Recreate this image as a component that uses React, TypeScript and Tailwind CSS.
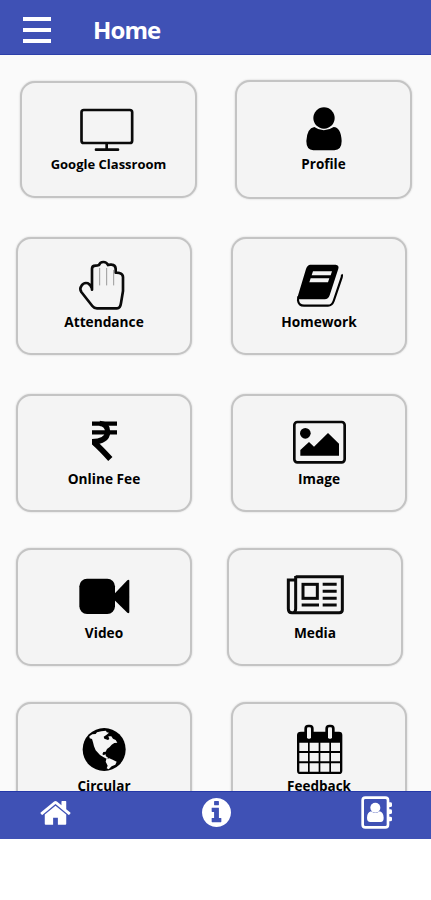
import type { ReactNode } from "react";

interface Tile {
  label: string;
  labelClass?: string;
  viewBox: string;
  icon: ReactNode;
  cardClass?: string;
}

interface TileRow {
  className: string;
  tiles: Tile[];
}

const MonitorIcon = (
  <g fill="none" stroke="#0a0a0a" strokeWidth="8">
    <rect x="244.5" y="330" width="152" height="99" rx="7" />
    <path d="M320 430v18M288 449h66" strokeLinecap="round" />
  </g>
);

const UserIcon = (
  <g>
    <circle cx="327" cy="174" r="32" />
    <path d="M298 201q28 20 58 0q22 2 24 42q0 27-22 28h-63q-21-1-21-28q2-39 24-42z" />
  </g>
);

const HandIcon = (
  <g fill="none" stroke="#0a0a0a" strokeLinejoin="round" strokeLinecap="round">
    <path
      strokeWidth="8"
      d="M276 194V131q0-9 11-9q5 0 10-2q3-9 13-9t14 9q5-2 11-1q11 1 12 12v12q4-1 11 1q11 3 11 12v42l-6 36q-2 16-12 16h-60q-9 0-14-7l-33-42q-6-10 0-18q7-12 20-8q8 4 12 16z"
    />
    <path stroke="#999" strokeWidth="3" d="M299 130v50M320 130v50M341 136v44" />
  </g>
);

const BookIcon = (
  <g>
    <path
      fillRule="evenodd"
      d="M285 119h77q11 1 8 12l-26 80q-4 12-15 12h-73q-6 0-9-5l26-86q3-11 12-13zM294 139l-4 12h57l4-12zM287 160l-4 12h56l4-12z"
    />
    <path
      d="M380 148q2 3 0 9l-24 71q-5 14-17 14h-72q-16 0-18-16q0-6 2-12"
      fill="none"
      stroke="#000"
      strokeWidth="6.5"
    />
  </g>
);

const RupeeIcon = (
  <g fill="none" stroke="#000">
    <path strokeWidth="13" d="M276 117h75M276 143h75" />
    <path strokeWidth="16" d="M299 116q24 2 24 26q-2 29-47 29" />
    <path strokeWidth="17" d="M282 173q22 20 49 50" />
    <path fill="#000" stroke="none" d="M276 165h16v22h-5l-11-9z" />
  </g>
);

const ImageIcon = (
  <g>
    <rect x="238" y="113" width="151" height="121" rx="9" fill="none" stroke="#080808" strokeWidth="8" />
    <circle cx="271" cy="147" r="16" />
    <path d="M256 214v-17l26-24 15 14 42-41 33 32v36z" />
  </g>
);

const VideoIcon = (
  <g>
    <rect x="238" y="116" width="107" height="106" rx="23" />
    <path d="M337 168l45-47q6-5 6 2v92q0 7-6 3l-45-44z" />
  </g>
);

const NewspaperIcon = (
  <g fill="none" stroke="#0a0a0a" strokeWidth="9">
    <path d="M242 110h140v100q0 8-9 8H231q-11 0-11-12v-86h21" />
    <path d="M242 108v98q0 9-6 12" />
    <rect x="264" y="133" width="43" height="42" />
    <path d="M260 195h52M323 133h42M323 154h42M323 175h42M323 195h42" />
  </g>
);

const GlobeIcon = (
  <g>
    <circle cx="312.5" cy="178.5" r="64.5" />
    <path
      fill="#f4f4f4"
      d="M268 139l9-6 10-1 4-5 13-3 14-2 2 5 7 1-8 7-8 5 2 6 11 4 4-3-3-8 9 0 5 7 8 4 5 8-9 1-8 5-6 7-8 6-4 8-7 1-3 7 5 3 4-4 2 7 7 5-4 3-10-5-11-7-13-14-5-12-3-12-3-10-7-2z"
    />
    <path fill="#f4f4f4" d="M319 207l9-2 10 4 12 6-4 9-11 5-9 9-6-3 3-8-6-12z" />
  </g>
);

const CalendarIcon = (
  <g>
    <path d="M258 125h114q10 0 10 10v107q0 10-10 10H256q-10 0-10-10V135q0-10 12-10z" />
    <rect x="268" y="104" width="28" height="45" rx="12" />
    <rect x="331" y="104" width="28" height="45" rx="12" />
    <path
      fill="#f4f4f4"
      d="M253 158h26v25h-26zM284 158h27v25h-27zM316 158h27v25h-27zM348 158h27v25h-27zM253 189h26v25h-26zM284 189h27v25h-27zM316 189h27v25h-27zM348 189h27v25h-27zM253 220h26v25h-26zM284 220h27v25h-27zM316 220h27v25h-27zM348 220h27v25h-27z"
    />
    <rect x="276" y="112" width="12" height="34" rx="4" fill="#f4f4f4" />
    <rect x="339" y="112" width="12" height="34" rx="4" fill="#f4f4f4" />
  </g>
);

const ROWS: TileRow[] = [
  {
    className: "mt-[25px] h-[119px] gap-[38px] pl-5",
    tiles: [
      { label: "Google Classroom", labelClass: "text-[13px] -mt-px", viewBox: "66 249 519 222", icon: MonitorIcon, cardClass: "mt-px h-[117px] w-[177px]" },
      { label: "Profile", labelClass: "text-[13.5px]", viewBox: "66 66 519 222", icon: UserIcon, cardClass: "h-[119px] w-[177px]" },
    ],
  },
  {
    className: "mt-[38px] h-[118px] gap-[39px] pl-4",
    tiles: [
      { label: "Attendance", viewBox: "54 42 516 222", icon: HandIcon },
      { label: "Homework", viewBox: "54 42 516 222", icon: BookIcon },
    ],
  },
  {
    className: "mt-[39px] h-[118px] gap-[39px] pl-4",
    tiles: [
      { label: "Online Fee", viewBox: "54 34 516 222", icon: RupeeIcon },
      { label: "Image", viewBox: "54 35 516 222", icon: ImageIcon },
    ],
  },
  {
    className: "mt-9 h-[118px] gap-[35px] pl-4",
    tiles: [
      { label: "Video", viewBox: "54 30 516 222", icon: VideoIcon },
      { label: "Media", viewBox: "42 30 516 222", icon: NewspaperIcon },
    ],
  },
  {
    className: "mt-9 h-[118px] gap-[39px] pl-4",
    tiles: [
      { label: "Circular", labelClass: "text-[13.5px]", viewBox: "54 42 516 222", icon: GlobeIcon },
      { label: "Feedback", labelClass: "text-[13.5px]", viewBox: "54 42 516 222", icon: CalendarIcon },
    ],
  },
];

const TileCard = ({ tile }: { tile: Tile }) => (
  <button
    className={`flex shrink-0 flex-col items-center rounded-[15px] border-2 border-[#c4c4c4] bg-[#f4f4f4] shadow-[0_0_2px_#c8c8c8] ${tile.cardClass ?? "h-[118px] w-[176px]"}`}
  >
    <svg viewBox={tile.viewBox} className="h-[74px] w-full shrink-0">
      {tile.icon}
    </svg>
    <span className={`whitespace-nowrap font-bold leading-[17px] text-black ${tile.labelClass ?? "text-[13.7px]"}`}>
      {tile.label}
    </span>
  </button>
);

const App = () => {
  return (
    <div className="flex h-[900px] w-[431px] flex-col overflow-hidden bg-white font-['Open_Sans','Noto_Sans',sans-serif]">
      {/* Header */}
      <header className="flex h-[55px] shrink-0 items-center border-b border-[#2c3fa9] bg-[#3f51b5] pl-[23px] pt-[5px]">
        <button className="flex w-7 flex-col gap-[7px] pt-px" aria-label="Menu">
          <span className="h-1 w-full bg-white" />
          <span className="h-1 w-full bg-white" />
          <span className="h-1 w-full bg-white" />
        </button>
        <h1 className="ml-[42px] text-[24px] font-bold leading-none tracking-[-0.9px] text-white">Home</h1>
      </header>

      {/* Tiles */}
      <main className="h-[736px] shrink-0 overflow-hidden bg-[#fafafa]">
        {ROWS.map((row, i) => (
          <div key={i} className={`flex items-start ${row.className}`}>
            {row.tiles.map((tile) => (
              <TileCard key={tile.label} tile={tile} />
            ))}
          </div>
        ))}
      </main>

      {/* Bottom bar */}
      <nav className="flex h-12 shrink-0 items-start justify-between border-t border-[#2438a8] bg-[#3f51b5] pl-10 pr-[38px] pt-1">
        <svg viewBox="64 160 1664 1376" className="mt-[3px] h-[26px] w-[31px]" fill="#fff">
          <path d="M1472 992v480q0 26-19 45t-45 19h-384v-384h-256v384h-384q-26 0-45-19t-19-45v-480q0-1 .5-3t.5-3l575-474 575 474q1 2 1 6zm223-69l-62 74q-8 9-21 11h-3q-13 0-21-7l-692-577-692 577q-12 8-24 7-13-2-21-11l-62-74q-8-10-7-23.5t11-21.5l719-599q32-26 76-26t76 26l244 204v-195q0-14 9-23t23-9h192q14 0 23 9t9 23v408l219 182q10 8 11 21.5t-7 23.5z" />
        </svg>
        <svg viewBox="128 128 1536 1536" className="mt-[2px] h-[29px] w-[29px]" fill="#fff">
          <path d="M1152 1376v-160q0-14-9-23t-23-9h-96v-512q0-14-9-23t-23-9h-320q-14 0-23 9t-9 23v160q0 14 9 23t23 9h96v320h-96q-14 0-23 9t-9 23v160q0 14 9 23t23 9h448q14 0 23-9t9-23zm-128-896v-160q0-14-9-23t-23-9h-192q-14 0-23 9t-9 23v160q0 14 9 23t23 9h192q14 0 23-9t9-23zm640 416q0 209-103 385.5t-279.5 279.5-385.5 103-385.5-103-279.5-279.5-103-385.5 103-385.5 279.5-279.5 385.5-103 385.5 103 279.5 279.5 103 385.5z" />
        </svg>
        <svg viewBox="0 0 96 99" className="h-[33px] w-8" fill="#fff">
          <rect x="5" y="5" width="76" height="89" rx="8" fill="none" stroke="#fff" strokeWidth="8" />
          <path d="M82 19h6q5 0 5 4v6q0 4-5 4h-6zM82 40h6q5 0 5 4v6q0 4-5 4h-6zM82 62h6q5 0 5 4v6q0 4-5 4h-6z" />
          <circle cx="43" cy="35" r="15" />
          <path d="M30 46q13 10 26 0q11 2 12 19q0 13-9 13H28q-10 0-10-13q1-17 12-19z" />
        </svg>
      </nav>
    </div>
  );
};

export default App;
